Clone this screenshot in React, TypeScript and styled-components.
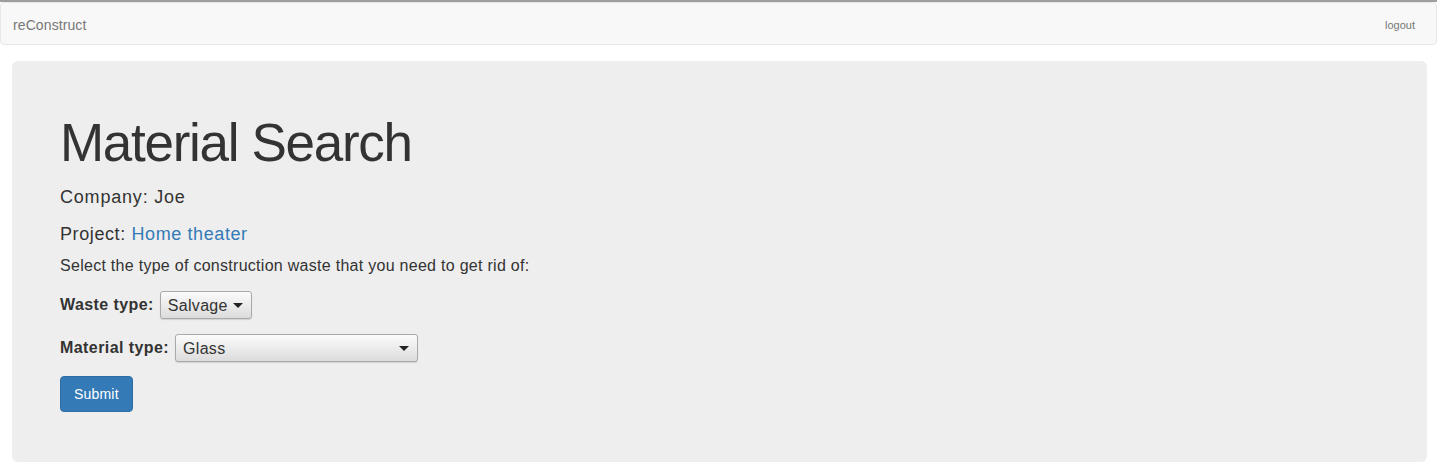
import styled, {createGlobalStyle} from "styled-components";

const GlobalStyle = createGlobalStyle`
	html, body {
		margin: 0;
		padding: 0;
		background: #ffffff;
	}
	body {
		border-top: 2px solid #9e9e9e;
		font-family: "Liberation Sans", Arial, sans-serif;
		font-size: 14px;
		color: #333333;
	}
`;

const Navbar = styled.nav`
	height: 41px;
	display: flex;
	align-items: center;
	justify-content: space-between;
	padding: 0 21px 0 12px;
	background: #f8f8f8;
	border: 1px solid #e7e7e7;
	border-radius: 4px;
	margin-bottom: 16px;
`;
const Brand = styled.a`
	font-size: 14px;
	letter-spacing: 0.1px;
	color: #777777;
	text-decoration: none;
	padding-top: 2px;
`;
const NavLink = styled.a`
	font-size: 11px;
	color: #777777;
	text-decoration: none;
	padding-top: 2px;
`;

const Jumbotron = styled.main`
	margin: 0 10px 0 12px;
	padding: 52px 48px 50px;
	background: #eeeeee;
	border-radius: 6px;
`;
const Title = styled.h1`
	margin: 0;
	font-size: 53px;
	line-height: 60px;
	letter-spacing: -1.3px;
	font-weight: 400;
	color: #333333;
`;
const InfoLine = styled.p<{$top: number; $spacing: number}>`
	margin: ${p => p.$top}px 0 0;
	font-size: 18px;
	line-height: 24px;
	letter-spacing: ${p => p.$spacing}px;
`;
const ProjectLink = styled.a`
	color: #337ab7;
	text-decoration: none;
`;
const Lead = styled.p`
	margin: 9px 0 0;
	font-size: 16px;
	line-height: 22px;
	letter-spacing: 0.28px;
`;

const Form = styled.form`
	display: flex;
	flex-direction: column;
	align-items: flex-start;
	margin-top: 14px;
	gap: 15px;
`;
const Field = styled.div`
	display: flex;
	align-items: center;
	gap: 6px;
	height: 28px;
`;
const Label = styled.label`
	font-size: 16px;
	font-weight: 700;
	letter-spacing: 0.42px;
	color: #333333;
`;
const SelectWrap = styled.div<{$width: number}>`
	position: relative;
	width: ${p => p.$width}px;
	height: 28px;
`;
const Select = styled.select`
	appearance: none;
	-webkit-appearance: none;
	width: 100%;
	height: 100%;
	margin: 0;
	padding: 0 24px 0 7px;
	font-family: "Liberation Sans", Arial, sans-serif;
	font-size: 16px;
	letter-spacing: 0.3px;
	color: #333333;
	background: linear-gradient(#fbfbfb, #dcdcdc);
	border: 1px solid #a9a9a9;
	border-radius: 3px;
	box-shadow: 0 1px 1px rgba(0, 0, 0, 0.12);
	outline: none;
`;
const Caret = styled.svg`
	position: absolute;
	right: 9px;
	top: 12px;
	pointer-events: none;
`;
const SubmitButton = styled.button`
	margin-top: -1px;
	height: 36px;
	padding: 0 13px;
	font-family: "Liberation Sans", Arial, sans-serif;
	font-size: 14px;
	letter-spacing: 0.2px;
	color: #ffffff;
	background: #337ab7;
	border: 1px solid #2e6da4;
	border-radius: 4px;
	cursor: pointer;
`;

const Dropdown = ({width, value, options}: {width: number; value: string; options: string[]}) => (
	<SelectWrap $width={width}>
		<Select defaultValue={value}>
			{options.map(o => <option key={o}>{o}</option>)}
		</Select>
		<Caret width="10" height="5" viewBox="0 0 10 5">
			<path d="M0 0h10L5 5z" fill="#222222"/>
		</Caret>
	</SelectWrap>
);

const App = () => (
	<>
		<GlobalStyle/>
		<Navbar>
			<Brand href="#">reConstruct</Brand>
			<NavLink href="#">logout</NavLink>
		</Navbar>
		<Jumbotron>
			<Title>Material Search</Title>
			<InfoLine $top={12} $spacing={0.8}>Company: Joe</InfoLine>
			<InfoLine $top={13} $spacing={0.6}>Project: <ProjectLink href="#">Home theater</ProjectLink></InfoLine>
			<Lead>Select the type of construction waste that you need to get rid of:</Lead>
			<Form onSubmit={e => e.preventDefault()}>
				<Field>
					<Label>Waste type:</Label>
					<Dropdown width={92} value="Salvage" options={["Salvage", "Recycle", "Landfill"]}/>
				</Field>
				<Field>
					<Label>Material type:</Label>
					<Dropdown width={243} value="Glass" options={["Glass", "Wood", "Metal", "Concrete", "Drywall"]}/>
				</Field>
				<SubmitButton type="submit">Submit</SubmitButton>
			</Form>
		</Jumbotron>
	</>
);

export default App;
